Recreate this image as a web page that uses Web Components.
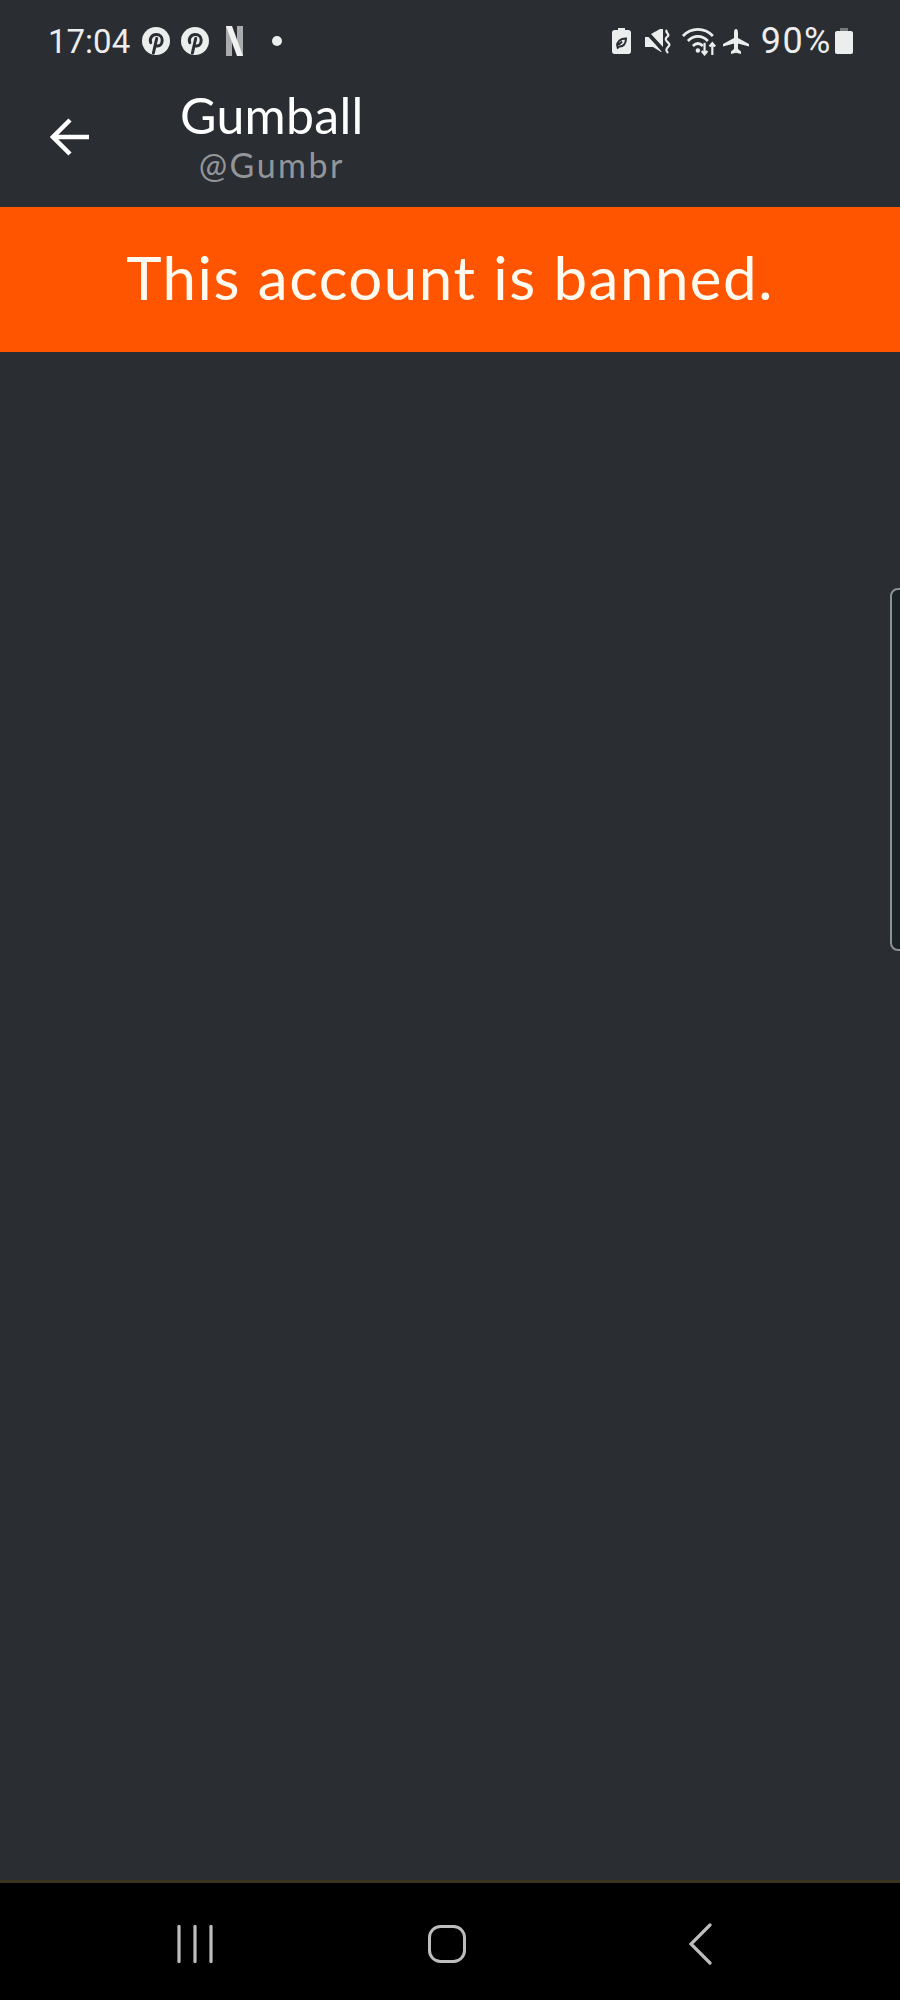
<!DOCTYPE html>
<html>
<head>
<meta charset="utf-8">
<title>Gumball</title>
<style>
    html, body { margin: 0; padding: 0; background: #2a2d31; }
</style>
</head>
<body>
<phone-shell>
    <status-bar></status-bar>
    <profile-header name="Gumball" handle="@Gumbr"></profile-header>
    <ban-banner>This account is banned.</ban-banner>
    <edge-handle></edge-handle>
    <nav-bar></nav-bar>
</phone-shell>

<script>
class PhoneShell extends HTMLElement {
    constructor() {
        super();
        this.attachShadow({ mode: 'open' });
        this.shadowRoot.innerHTML = `
            <style>
                :host {
                    display: flex;
                    flex-direction: column;
                    position: relative;
                    width: 900px;
                    height: 2000px;
                    overflow: hidden;
                    background: #2a2d31;
                    color: #fff;
                    font-family: "Lato", "Liberation Sans", sans-serif;
                }
            </style>
            <slot></slot>
        `;
    }
}

class StatusBar extends HTMLElement {
    constructor() {
        super();
        this.attachShadow({ mode: 'open' });
        const pin = `
            <svg width="28" height="28" viewBox="0 0 28 28">
                <circle cx="14" cy="14" r="14" fill="#eceded"/>
                <path d="M8.800 15.600c-1.600-3.800 1-8 5.600-8 3.700 0 5.800 2.500 5.800 5.500 0 3.400-2 6-4.700 6-1.100 0-2-.6-2.300-1.300M14.700 11.500l-3.300 14.500" fill="none" stroke="#2a2d31" stroke-width="3" stroke-linecap="round"/>
            </svg>`;
        this.shadowRoot.innerHTML = `
            <style>
                :host {
                    display: flex;
                    justify-content: space-between;
                    align-items: center;
                    height: 82px;
                    flex: none;
                    padding: 0 47px 0 48px;
                    box-sizing: border-box;
                    font-family: "Roboto", "Liberation Sans", sans-serif;
                    font-size: 33px;
                    font-weight: 400;
                    color: #eceded;
                }
                .side { display: flex; align-items: center; }
                svg { display: block; flex: none; }
                .time { width: 94px; }
                .pct { margin: 0 3px 0 12px; font-size: 36px; letter-spacing: 1.500px; }
            </style>
            <div class="side">
                <span class="time">17:04</span>
                ${pin}
                <span style="width:11px"></span>
                ${pin}
                <svg style="margin-left:17px" width="17" height="30" viewBox="0 0 17 30">
                    <path d="M0 0h6v30H0z" fill="#a9abad"/>
                    <path d="M11 0h6v30h-6z" fill="#a9abad"/>
                    <path d="M0 0h6l11 30h-6z" fill="#f1f1f1"/>
                </svg>
                <svg style="margin-left:29px" width="10" height="10" viewBox="0 0 10 10">
                    <circle cx="5" cy="5" r="5" fill="#eceded"/>
                </svg>
            </div>
            <div class="side">
                <svg width="19" height="26" viewBox="0 0 19 26">
                    <path d="M6 0h7v2h3.500c1.400 0 2.500 1.100 2.500 2.500v19c0 1.400-1.100 2.500-2.500 2.500h-14C1.100 26 0 24.900 0 23.500v-19C0 3.100 1.100 2 2.500 2H6z" fill="#eceded"/>
                    <path d="M5 18.500c0-5 3.500-8 9-8 0 5.500-3 8.500-7 8l-2 2m2-4 3-3" fill="none" stroke="#2a2d31" stroke-width="2"/>
                </svg>
                <svg style="margin-left:14px" width="26" height="25" viewBox="0 0 26 25">
                    <path d="M0 8h3.500l14 15H16L8 18H0zM6 5l9-5h3v18z" fill="#eceded"/>
                    <path d="M2 2l16 21" stroke="#2a2d31" stroke-width="2"/>
                    <path d="M22 1c-2.500 2.500 3 4 1 6s-3.500 3-1 5.500 3.500 3 1 5.500-2 3.500 0 6" fill="none" stroke="#eceded" stroke-width="2.200"/>
                </svg>
                <svg style="margin-left:10px" width="36" height="30" viewBox="0 0 32 27">
                    <path d="M1.500 9C9 1 21 1 28.500 9M6 13.500c5.500-5.500 12.500-5.500 18 0M10.500 18c3-3 6-3 9 0" fill="none" stroke="#eceded" stroke-width="2.400"/>
                    <circle cx="15" cy="22" r="2" fill="#eceded"/>
                    <path d="M21 15v10M18.500 22.500l2.500 3 2.500-3M28 26V16M25.500 18.500l2.500-3 2.500 3" fill="none" stroke="#eceded" stroke-width="2"/>
                </svg>
                <svg style="margin-left:6px" width="26" height="25" viewBox="0 0 26 25">
                    <path d="M13 0c1.300 0 2 1.700 2 3.500V9l11 6v2.500l-11-3V20l3 2.500V25l-5-1.300L8 25v-2.500l3-2.500v-5.500l-11 3V15l11-6V3.500C11 1.700 11.700 0 13 0z" fill="#eceded"/>
                </svg>
                <span class="pct">90%</span>
                <svg width="18" height="26" viewBox="0 0 18 26">
                    <path d="M5 0h8v3H5z" fill="#77797c"/>
                    <path d="M2 3h14c1.100 0 2 .9 2 2v19c0 1.100-.9 2-2 2H2c-1.100 0-2-.9-2-2V5c0-1.100.9-2 2-2z" fill="#eceded"/>
                </svg>
            </div>
        `;
    }
}

class ProfileHeader extends HTMLElement {
    constructor() {
        super();
        this.attachShadow({ mode: 'open' });
    }

    connectedCallback() {
        const name = this.getAttribute('name');
        const handle = this.getAttribute('handle');
        this.shadowRoot.innerHTML = `
            <style>
                :host {
                    display: flex;
                    align-items: center;
                    height: 125px;
                    flex: none;
                    padding: 0 0 16px 50px;
                    box-sizing: border-box;
                }
                .titles {
                    display: flex;
                    flex-direction: column;
                    align-items: center;
                    margin: 0 0 5px 90px;
                }
                .name { font-size: 50px; line-height: 58px; letter-spacing: .3px; }
                .handle { margin-top: 3px; font-size: 34px; line-height: 36px; color: #92969a; letter-spacing: 2.500px; }
                svg { display: block; flex: none; }
            </style>
            <svg width="40" height="40" viewBox="0 0 40 40">
                <path d="M39 20H4M20 3 3 20l17 17" fill="none" stroke="#fff" stroke-width="4.500"/>
            </svg>
            <div class="titles">
                <div class="name">${name}</div>
                <div class="handle">${handle}</div>
            </div>
        `;
    }
}

class BanBanner extends HTMLElement {
    constructor() {
        super();
        this.attachShadow({ mode: 'open' });
        this.shadowRoot.innerHTML = `
            <style>
                :host {
                    display: flex;
                    justify-content: center;
                    align-items: center;
                    height: 145px;
                    flex: none;
                    padding-bottom: 6px;
                    box-sizing: border-box;
                    background: #ff5500;
                    color: #fffaf0;
                    font-size: 60px;
                    letter-spacing: 1.500px;
                }
            </style>
            <slot></slot>
        `;
    }
}

class EdgeHandle extends HTMLElement {
    constructor() {
        super();
        this.attachShadow({ mode: 'open' });
        this.shadowRoot.innerHTML = `
            <style>
                :host {
                    position: absolute;
                    top: 588px;
                    right: -10px;
                    width: 20px;
                    height: 363px;
                    box-sizing: border-box;
                    border: 2px solid #8d9194;
                    border-radius: 8px;
                    background: #1c2326;
                }
            </style>
        `;
    }
}

class NavBar extends HTMLElement {
    constructor() {
        super();
        this.attachShadow({ mode: 'open' });
        this.shadowRoot.innerHTML = `
            <style>
                :host {
                    display: flex;
                    align-items: center;
                    margin-top: auto;
                    height: 120px;
                    flex: none;
                    box-sizing: border-box;
                    border-top: 3px solid #38341f;
                    padding: 4px 0 0 176px;
                    background: #000;
                }
                svg { display: block; flex: none; }
            </style>
            <svg width="38" height="38" viewBox="0 0 38 38">
                <path d="M3 1.500v35M19 1.500v35M35 1.500v35" fill="none" stroke="#bdbdbd" stroke-width="3.200" stroke-linecap="round"/>
            </svg>
            <svg style="margin-left:214px" width="38" height="38" viewBox="0 0 38 38">
                <rect x="1.500" y="1.500" width="35" height="35" rx="11" fill="none" stroke="#bdbdbd" stroke-width="3"/>
            </svg>
            <svg style="margin-left:222px" width="24" height="42" viewBox="0 0 24 42">
                <path d="M22 2 3 21l19 19" fill="none" stroke="#bdbdbd" stroke-width="3.200" stroke-linecap="round"/>
            </svg>
        `;
    }
}

customElements.define('phone-shell', PhoneShell);
customElements.define('status-bar', StatusBar);
customElements.define('profile-header', ProfileHeader);
customElements.define('ban-banner', BanBanner);
customElements.define('edge-handle', EdgeHandle);
customElements.define('nav-bar', NavBar);
</script>
</body>
</html>
